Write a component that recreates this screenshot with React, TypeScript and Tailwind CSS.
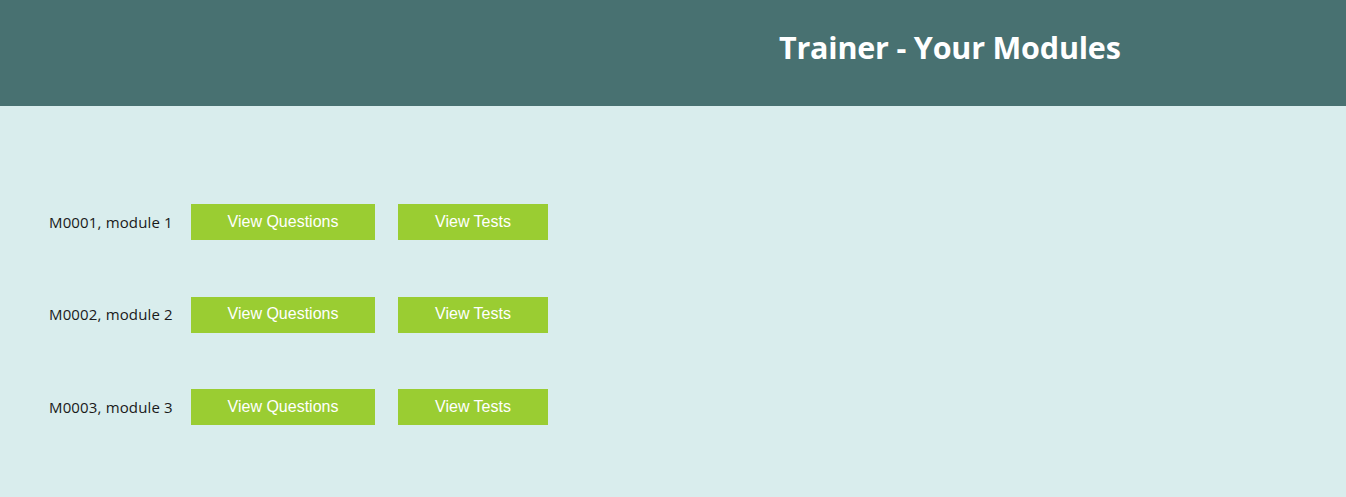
import React from "react";

const modules = [
  { id: "M0001", name: "module 1" },
  { id: "M0002", name: "module 2" },
  { id: "M0003", name: "module 3" },
];

export default function App() {
  return (
    <div className="min-h-[497px] w-full bg-[#d9eded]">
      <header className="flex h-[106px] items-center bg-[#487171] pl-[779px]">
        <h1 className="-mt-[11px] font-['Open_Sans',sans-serif] text-[30.5px] font-bold tracking-[-0.2px] text-white">
          Trainer - Your Modules
        </h1>
      </header>
      <main className="flex flex-col gap-[56.5px] pl-[49px] pt-[98px]">
        {modules.map((m) => (
          <div key={m.id} className="flex items-center">
            <span className="w-[142px] font-['Open_Sans',sans-serif] text-[15px] tracking-[0.15px] text-[#1a1a1a]">
              {m.id}, {m.name}
            </span>
            <button className="h-[36px] w-[184px] bg-[#9acd32] pb-[1px] font-['Liberation_Sans',Arial,sans-serif] text-[16px] text-white">
              View Questions
            </button>
            <button className="ml-[23px] h-[36px] w-[150px] bg-[#9acd32] pb-[1px] font-['Liberation_Sans',Arial,sans-serif] text-[16px] text-white">
              View Tests
            </button>
          </div>
        ))}
      </main>
    </div>
  );
}
